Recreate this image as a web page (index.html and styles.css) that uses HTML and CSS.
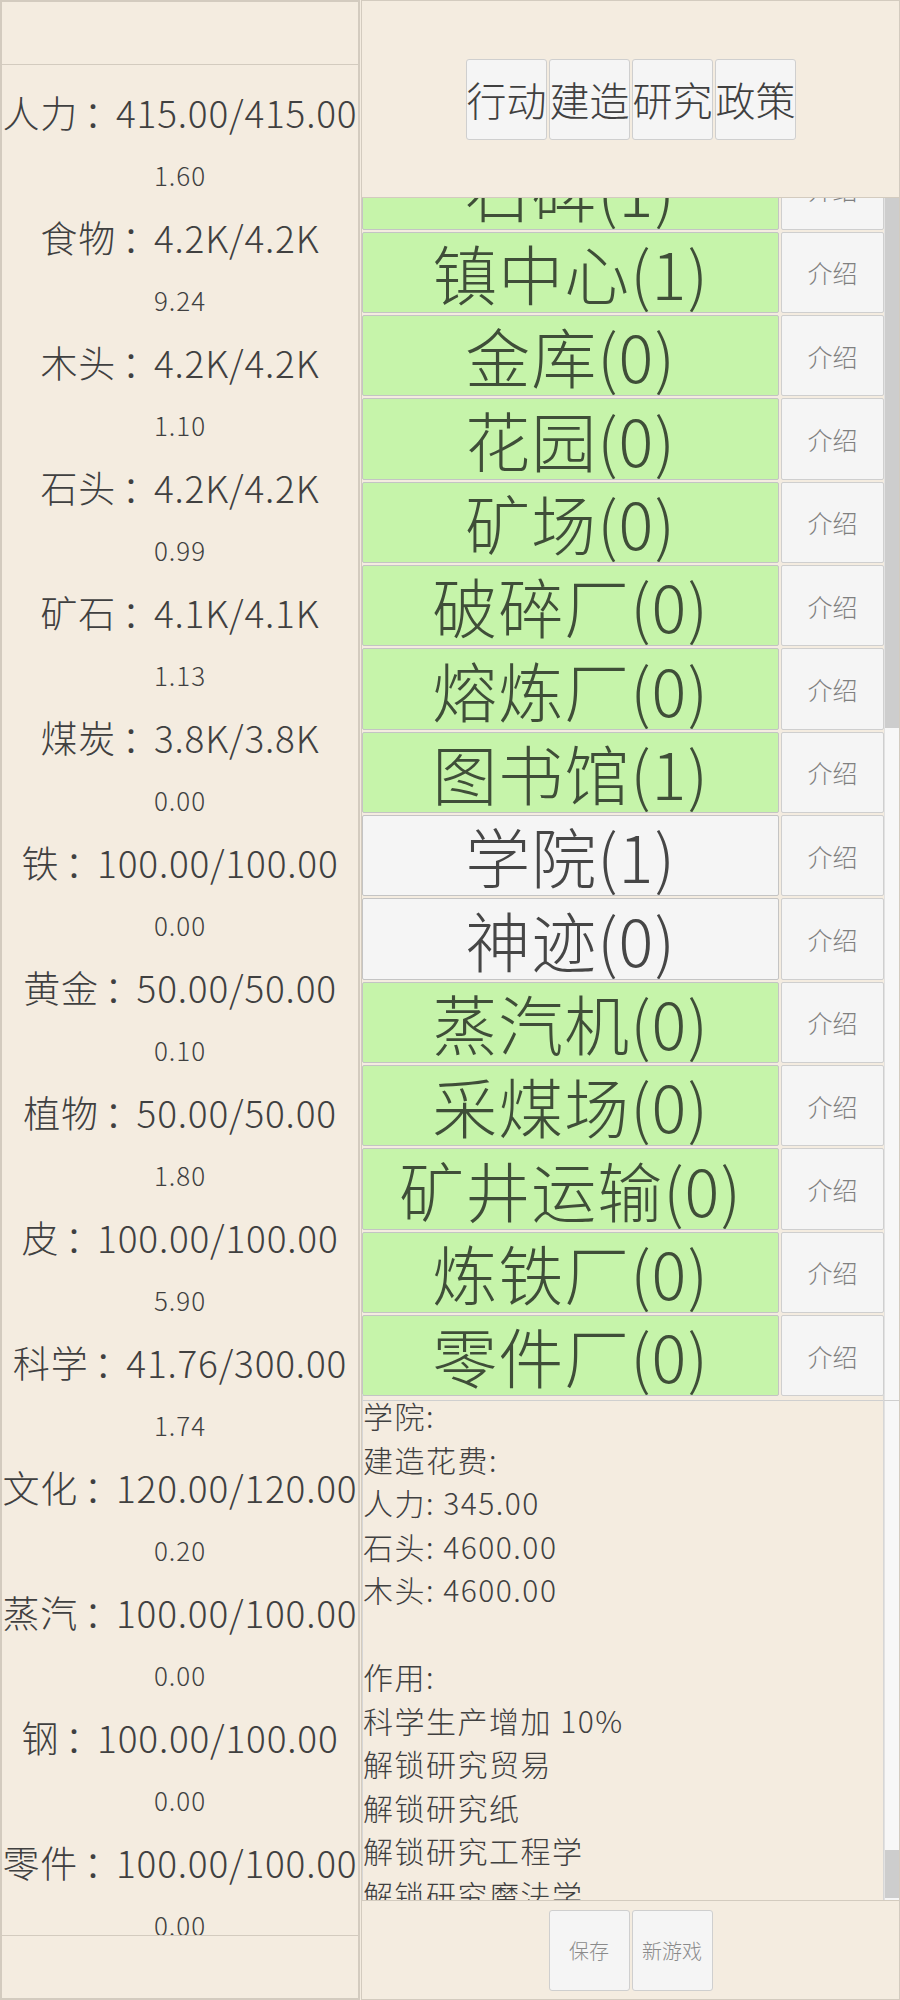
FILE: index.html
```html
<!DOCTYPE html>
<html lang="zh">
<head>
  <meta charset="UTF-8" />
  <title>文明</title>
  <link rel="stylesheet" href="styles.css">
</head>
<body>

  <div class="side">
    <div class="side-top"></div>
    <div class="res-list">
      <div class="res">人力<span class="sep">：</span>415.00/415.00</div><div class="rate">1.60</div>
      <div class="res">食物<span class="sep">：</span>4.2K/4.2K</div><div class="rate">9.24</div>
      <div class="res">木头<span class="sep">：</span>4.2K/4.2K</div><div class="rate">1.10</div>
      <div class="res">石头<span class="sep">：</span>4.2K/4.2K</div><div class="rate">0.99</div>
      <div class="res">矿石<span class="sep">：</span>4.1K/4.1K</div><div class="rate">1.13</div>
      <div class="res">煤炭<span class="sep">：</span>3.8K/3.8K</div><div class="rate">0.00</div>
      <div class="res">铁<span class="sep">：</span>100.00/100.00</div><div class="rate">0.00</div>
      <div class="res">黄金<span class="sep">：</span>50.00/50.00</div><div class="rate">0.10</div>
      <div class="res">植物<span class="sep">：</span>50.00/50.00</div><div class="rate">1.80</div>
      <div class="res">皮<span class="sep">：</span>100.00/100.00</div><div class="rate">5.90</div>
      <div class="res">科学<span class="sep">：</span>41.76/300.00</div><div class="rate">1.74</div>
      <div class="res">文化<span class="sep">：</span>120.00/120.00</div><div class="rate">0.20</div>
      <div class="res">蒸汽<span class="sep">：</span>100.00/100.00</div><div class="rate">0.00</div>
      <div class="res">钢<span class="sep">：</span>100.00/100.00</div><div class="rate">0.00</div>
      <div class="res">零件<span class="sep">：</span>100.00/100.00</div><div class="rate">0.00</div>
    </div>
    <div class="side-bottom"></div>
  </div>

  <div class="main">
    <div class="tabs">
      <button class="tab">行动</button>
      <button class="tab">建造</button>
      <button class="tab">研究</button>
      <button class="tab">政策</button>
    </div>

    <div class="buildings">
      <div class="b-rows">
        <div class="row"><button class="b-name ok">石碑(1)</button><button class="b-info">介绍</button></div>
        <div class="row"><button class="b-name ok">镇中心(1)</button><button class="b-info">介绍</button></div>
        <div class="row"><button class="b-name ok">金库(0)</button><button class="b-info">介绍</button></div>
        <div class="row"><button class="b-name ok">花园(0)</button><button class="b-info">介绍</button></div>
        <div class="row"><button class="b-name ok">矿场(0)</button><button class="b-info">介绍</button></div>
        <div class="row"><button class="b-name ok">破碎厂(0)</button><button class="b-info">介绍</button></div>
        <div class="row"><button class="b-name ok">熔炼厂(0)</button><button class="b-info">介绍</button></div>
        <div class="row"><button class="b-name ok">图书馆(1)</button><button class="b-info">介绍</button></div>
        <div class="row"><button class="b-name">学院(1)</button><button class="b-info">介绍</button></div>
        <div class="row"><button class="b-name">神迹(0)</button><button class="b-info">介绍</button></div>
        <div class="row"><button class="b-name ok">蒸汽机(0)</button><button class="b-info">介绍</button></div>
        <div class="row"><button class="b-name ok">采煤场(0)</button><button class="b-info">介绍</button></div>
        <div class="row"><button class="b-name ok">矿井运输(0)</button><button class="b-info">介绍</button></div>
        <div class="row"><button class="b-name ok">炼铁厂(0)</button><button class="b-info">介绍</button></div>
        <div class="row"><button class="b-name ok">零件厂(0)</button><button class="b-info">介绍</button></div>
      </div>
      <div class="scrollbar"><div class="thumb list-thumb"></div></div>
    </div>

    <div class="desc">
      <div class="desc-text">
        学院:<br>
        建造花费:<br>
        人力: 345.00<br>
        石头: 4600.00<br>
        木头: 4600.00<br>
        <br>
        作用:<br>
        科学生产增加 10%<br>
        解锁研究贸易<br>
        解锁研究纸<br>
        解锁研究工程学<br>
        解锁研究魔法学<br>
        解锁研究天文学
      </div>
      <div class="scrollbar end"><div class="thumb desc-thumb"></div></div>
    </div>

    <div class="footer">
      <button class="small-btn">保存</button>
      <button class="small-btn">新游戏</button>
    </div>
  </div>

</body>
</html>
```

FILE: styles.css
```css
body {
  margin: 0;
  height: 100vh;
  display: flex;
  font-family: "Noto Sans CJK SC", sans-serif;
  font-weight: 300;
  background: #f4ece0;
  color: #404040;
}

button {
  font-family: inherit;
  font-weight: inherit;
  padding: 0;
  cursor: pointer;
}

/* columna izquierda: recursos */
.side {
  width: 360px;
  box-sizing: border-box;
  border: 1px solid #d3cbbf;
  display: flex;
  flex-direction: column;
}

.side-top,
.side-bottom {
  height: 62px;
  border: 1px solid #d3cbbf;
}

.res-list {
  flex: 1;
  overflow: hidden;
  padding-top: 16px;
  text-align: center;
  border: 1px solid #d3cbbf;
  border-top: none;
  border-bottom: none;
}

.res {
  font-size: 37px;
  line-height: 62.5px;
  letter-spacing: 0.8px;
  white-space: nowrap;
}

.sep {
  padding-left: 0.15em;
  margin-right: -0.15em;
}

.rate {
  font-size: 26px;
  line-height: 62.5px;
  letter-spacing: 1px;
}

/* columna derecha */
.main {
  flex: 1;
  margin-left: 1px;
  border: 1px solid #d3cbbf;
  display: flex;
  flex-direction: column;
}

.tabs {
  height: 196px;
  border-bottom: 1px solid #d3cbbf;
  display: flex;
  align-items: center;
  justify-content: center;
  gap: 2px;
}

.tab {
  width: 81px;
  height: 81px;
  font-size: 40px;
  color: #404040;
  background: #f5f5f5;
  border: 1px solid #cfcfcf;
  border-radius: 3px;
  white-space: nowrap;
}

.buildings {
  height: 1202px;
  display: flex;
  overflow: hidden;
}

.b-rows {
  flex: 1;
  margin-top: -49.6px;
}

.row {
  height: 83.34px;
  box-sizing: border-box;
  padding-bottom: 2px;
  display: flex;
  gap: 2px;
}

.b-name {
  flex: 1;
  font-size: 65px;
  line-height: 1;
  letter-spacing: 1px;
  color: #464646;
  background: #f5f5f5;
  border: 1px solid #c4c4c4;
  border-radius: 2px;
  white-space: nowrap;
  overflow: hidden;
}

.b-name.ok {
  background: #c6f4aa;
  color: #3f4e38;
}

.b-info {
  width: 103px;
  font-size: 25px;
  color: #808080;
  background: #f5f5f5;
  border: 1px solid #cfcfcf;
  border-radius: 2px;
}

.scrollbar {
  width: 14px;
  background: #f7f7f7;
  border-left: 1px solid #e2e2e2;
  display: flex;
  flex-direction: column;
}

.scrollbar.end {
  justify-content: flex-end;
}

.thumb {
  background: #cdcdcd;
}

.list-thumb {
  height: 530px;
}

.desc-thumb {
  height: 48px;
  margin-bottom: 2px;
}

.desc {
  height: 500px;
  display: flex;
  border-top: 1px solid #cfcfcf;
  box-sizing: border-box;
}

.desc-text {
  flex: 1;
  overflow: hidden;
  font-size: 30px;
  line-height: 43.5px;
  letter-spacing: 1.5px;
  margin-top: -7px;
  border-left: 1px solid #d6d6d6;
  border-right: 1px solid #d6d6d6;
}

.footer {
  flex: 1;
  border-top: 1px solid #d3cbbf;
  display: flex;
  align-items: center;
  justify-content: center;
  gap: 2px;
}

.small-btn {
  width: 81px;
  height: 81px;
  font-size: 20px;
  color: #8a8a8a;
  background: #f5f5f5;
  border: 1px solid #cfcfcf;
  border-radius: 3px;
}
```
